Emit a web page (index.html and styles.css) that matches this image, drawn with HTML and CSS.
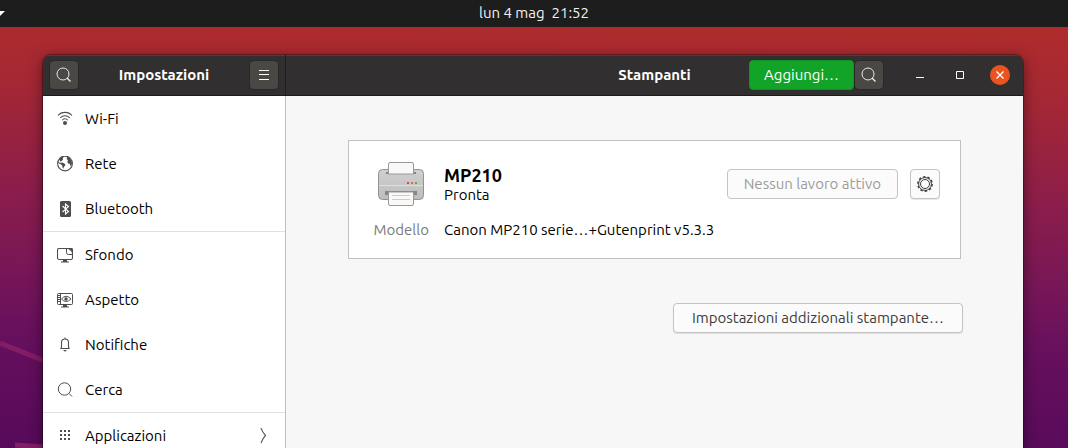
FILE: index.html
```
<!DOCTYPE html>
<html lang="it">
<head>
  <meta charset="UTF-8">
  <meta name="viewport" content="width=device-width, initial-scale=1">
  <title>Impostazioni - Stampanti</title>
  <link rel="stylesheet" href="styles.css">
</head>
<body>
  <header class="topbar">
    <svg class="topbar-arrow" width="5" height="5" viewBox="0 0 5 5"><path d="M0 0h5L0 5z" fill="#fff"/></svg>
    <time class="clock">lun 4 mag&nbsp; 21:52</time>
  </header>

  <main class="desktop">
    <!-- wallpaper lines -->
    <svg class="wallpaper-lines" width="60" height="130" viewBox="0 0 60 130">
      <path d="M0 25L60 49M15 127L60 130" fill="none" stroke="#821d66" stroke-width="5"/>
    </svg>

    <div class="window">
      <div class="titlebar">
        <div class="titlebar-left">
          <button class="dark-btn" aria-label="Cerca">
            <svg width="16" height="16" viewBox="0 0 16 16" fill="none" stroke="#e8e8e7"><circle cx="7" cy="7" r="6"/><path d="M11 11l3.500 3.500" stroke-width="1.4"/></svg>
          </button>
          <h1>Impostazioni</h1>
          <button class="dark-btn" aria-label="Menu">
            <svg width="16" height="16" viewBox="0 0 16 16" fill="none" stroke="#fff"><path d="M3 3.5h10M3 7.5h10M3 12.5h10"/></svg>
          </button>
        </div>
        <div class="titlebar-right">
          <h2>Stampanti</h2>
          <div class="actions">
            <button class="add-btn">Aggiungi…</button>
            <button class="dark-btn" aria-label="Cerca stampanti">
              <svg width="16" height="16" viewBox="0 0 16 16" fill="none" stroke="#e8e8e7"><circle cx="7" cy="7" r="6"/><path d="M11 11l3.500 3.500" stroke-width="1.4"/></svg>
            </button>
            <div class="controls">
              <button class="win-btn" aria-label="Minimizza">
                <svg width="16" height="16" viewBox="0 0 16 16"><path d="M4 10h8v1H4z" fill="#fff"/></svg>
              </button>
              <button class="win-btn" aria-label="Massimizza">
                <svg width="16" height="16" viewBox="0 0 16 16"><path d="M4.5 4.5h7v7h-7z" fill="none" stroke="#fff"/></svg>
              </button>
              <button class="win-btn close" aria-label="Chiudi">
                <svg width="16" height="16" viewBox="0 0 16 16"><path d="M4.5 4.5l7 7M11.5 4.5l-7 7" stroke="#fff" stroke-width="1.3"/></svg>
              </button>
            </div>
          </div>
        </div>
      </div>

      <div class="panes">
        <nav class="sidebar">
          <a href="#wifi">
            <svg width="16" height="16" viewBox="0 0 16 16" fill="none" stroke="#4d4d4d" stroke-width="1.1"><path d="M1 4.500C4.500 .3 11.500 .3 15 4.500M3.200 7C5.500 4 10.500 4 12.800 7M5.200 9.300C6.500 7.300 9.500 7.300 10.800 9.300"/><circle cx="8" cy="12" r="2" fill="#4d4d4d" stroke="none"/></svg>
            Wi-Fi
          </a>
          <a href="#rete">
            <svg width="16" height="16" viewBox="0 0 16 16"><circle cx="8" cy="7.500" r="7.400" fill="none" stroke="#4d4d4d" stroke-width="1.100"/><path d="M2 3L5 .8l1.500.4-.8 1.300.4 1L4.500 5l-1 .7zM3.500 6.500l2.500.3 2.300 1.400-.2 1.300-1.300 1.500-.3 1.500-.9-.2-.3-2.600L3.800 8.200zM1 4.500l1.200 2L4 7.500l-.5.7L1.200 7zM10 .8l3 1.500 2 4-.4 3-1.200.8-.7-2.400-1.500-.3-.9-1.700.7-1.500L9.700 3z" fill="#4d4d4d"/></svg>
            Rete
          </a>
          <a href="#bluetooth">
            <svg width="16" height="16" viewBox="0 0 16 16"><rect x="3" width="11" height="16" rx="1.500" fill="#4d4d4d"/><path d="M5.500 5l6 5.500-3 2.500V3l3 2.500-6 5.500" fill="none" stroke="#fff" stroke-width="1.100"/></svg>
            Bluetooth
          </a>
          <a href="#sfondo" class="group-start">
            <svg width="16" height="16" viewBox="0 0 16 16"><rect x=".5" y="1.500" width="15" height="11" rx="1.500" fill="none" stroke="#4d4d4d" stroke-width="1.100"/><path d="M9.500 1.500v4q0 2 2 2h4" fill="none" stroke="#4d4d4d"/><path d="M10.500 1.500Q14 3 15.500 7V1.500z" fill="#4d4d4d"/><path d="M6 12.500h4v2h2v1H4v-1h2z" fill="#4d4d4d"/></svg>
            Sfondo
          </a>
          <a href="#aspetto">
            <svg width="16" height="16" viewBox="0 0 16 16"><rect x=".5" y="1.500" width="15" height="11" rx="1" fill="none" stroke="#4d4d4d"/><path d="M3.500 1.500v11M1 3.500h2M1 5.500h2M1 7.500h2M1 9.500h2" stroke="#4d4d4d"/><path d="M4.500 7Q9 1.500 14 7 9 12 4.500 7z" fill="none" stroke="#4d4d4d"/><circle cx="9" cy="7" r="1.700" fill="#4d4d4d"/><path d="M6 12.500h4v2h2v1H4v-1h2z" fill="#4d4d4d"/></svg>
            Aspetto
          </a>
          <a href="#notifiche">
            <svg width="16" height="16" viewBox="0 0 16 16" fill="none" stroke="#4d4d4d" stroke-width="1.100"><path d="M3.500 11.500q1-.5 1-2V5.500Q4.500 2 8 2T11.500 5.500v4q0 1.500 1 2zM8 .5V2"/><path d="M6 13h4l-2 1.700z" fill="#4d4d4d" stroke="none"/></svg>
            Notifiche
          </a>
          <a href="#cerca">
            <svg width="16" height="16" viewBox="0 0 16 16" fill="none" stroke="#4d4d4d"><circle cx="7.500" cy="7" r="6.200"/><path d="M12 11.500l3 3"/></svg>
            Cerca
          </a>
          <a href="#applicazioni" class="group-start">
            <svg width="16" height="16" viewBox="0 0 16 16"><path d="M3 2h2v2H3zM7 2h2v2H7zM11 2h2v2h-2zM3 6h2v2H3zM7 6h2v2H7zM11 6h2v2h-2zM3 10h2v2H3zM7 10h2v2H7zM11 10h2v2h-2z" fill="#4d4d4d"/></svg>
            Applicazioni
            <svg class="chevron" width="16" height="16" viewBox="0 0 16 16"><path d="M6 0Q7.500 4.500 10.500 7.500 7.500 10.500 6 15" fill="none" stroke="#5a5a5a" stroke-width="1.100"/></svg>
          </a>
        </nav>

        <section class="content">
          <article class="printer">
            <svg class="printer-icon" width="48" height="48" viewBox="0 0 48 48">
              <defs>
                <linearGradient id="shell" x2="0" y2="1"><stop offset="0" stop-color="#d0d0d0"/><stop offset="1" stop-color="#bdbdbd"/></linearGradient>
              </defs>
              <rect x="1.500" y="9.500" width="45" height="30" rx="4" fill="url(#shell)" stroke="#929292"/>
              <path d="M2 25.500h44" stroke="#dedede"/>
              <path d="M9 12h30v2H9zM8 31h32v4H8z" fill="#858585"/>
              <path d="M11.500 14V4q0-1.500 1.500-1.500h22q1.500 0 1.500 1.500v10z" fill="#faf9f8" stroke="#999"/>
              <path d="M11.500 32h25v12q0 1.500-1.500 1.500H13q-1.500 0-1.500-1.500z" fill="#faf9f8" stroke="#999"/>
              <path d="M15 35.500h18M15 39.500h18" stroke="#ccc"/>
              <path d="M30 22h2v2h-2z" fill="#e0425b"/>
              <path d="M34 22h2v2h-2z" fill="#ed6b36"/>
              <path d="M38 22h2v2h-2z" fill="#5db34a"/>
            </svg>
            <div class="printer-name">
              <h3>MP210</h3>
              <p>Pronta</p>
            </div>
            <div class="printer-actions">
              <button class="light-btn" disabled>Nessun lavoro attivo</button>
              <button class="light-btn icon-btn" aria-label="Opzioni stampante">
                <svg width="18" height="18" viewBox="0 0 18 18" fill="none" stroke="#3d3d3d"><circle cx="9" cy="9" r="7.200" stroke-width="1.400" stroke-dasharray="2.500 2.024"/><circle cx="9" cy="9" r="6.400"/><circle cx="9" cy="9" r="4.500"/></svg>
              </button>
            </div>
            <span class="label">Modello</span>
            <span class="model">Canon MP210 serie…+Gutenprint v5.3.3</span>
          </article>
          <button class="light-btn extra-btn">Impostazioni addizionali stampante…</button>
        </section>
      </div>
    </div>
  </main>
</body>
</html>
```

FILE: styles.css
```
* {
  margin: 0;
  padding: 0;
  box-sizing: border-box;
}

body {
  height: 100vh;
  display: flex;
  flex-direction: column;
  overflow: hidden;
  font-family: Ubuntu, "Noto Sans", "Open Sans", sans-serif;
  font-size: 15px;
  line-height: 20px;
  color: #000;
}

button {
  font: inherit;
  display: flex;
  align-items: center;
  justify-content: center;
}

svg {
  display: block;
  flex: none;
}

h1,
h2 {
  font-size: 15px;
  font-weight: bold;
  text-align: center;
}

.topbar {
  flex: none;
  height: 27px;
  padding-bottom: 1px;
  display: grid;
  grid-template-columns: 1fr auto 1fr;
  align-items: center;
  background: #1d1d1d;
  color: #f2f2f2;
}

.desktop {
  flex: 1;
  min-height: 0;
  display: flex;
  position: relative;
  padding: 28px 45px 0 43px;
  background: linear-gradient(181deg, #b02c2b 0%, #a32735 18%, #8c1e4a 40%, #771658 60%, #650f5d 76%, #560a5a 100%);
}

.wallpaper-lines {
  position: absolute;
  left: 0;
  bottom: 0;
}

.window {
  flex: 1;
  display: flex;
  flex-direction: column;
  position: relative;
  border-radius: 8px 8px 0 0;
  box-shadow: 0 0 0 1px rgba(0, 0, 0, 0.3), 0 3px 14px rgba(0, 0, 0, 0.5);
  overflow: hidden;
}

/* title bar */
.titlebar {
  flex: none;
  height: 41px;
  display: flex;
  background: #322f30;
  border-bottom: 1px solid #1c1a1b;
  box-shadow: inset 0 1px #454243;
  color: #fff;
}

.titlebar-left {
  width: 243px;
  display: flex;
  align-items: center;
  justify-content: space-between;
  padding: 0 7px;
  border-right: 1px solid #1f1d1e;
}

.titlebar-right {
  flex: 1;
  display: grid;
  grid-template-columns: 1fr auto 1fr;
  align-items: center;
}

.titlebar-right h2 {
  grid-column: 2;
}

.actions {
  display: flex;
  align-items: center;
  justify-content: flex-end;
  gap: 1px;
  padding-right: 13px;
}

.dark-btn {
  width: 28px;
  height: 28px;
  border: 0;
  border-radius: 4px;
  background: #4a4845;
  box-shadow: 0 0 0 1px #292728;
}

.add-btn {
  height: 30px;
  padding: 0 14px;
  border: 1px solid #0e9420;
  border-radius: 4px;
  background: #12a428;
  color: #fff;
}

.controls {
  display: flex;
  gap: 20px;
  padding-left: 26px;
}

.win-btn {
  width: 20px;
  height: 20px;
  border: 0;
  border-radius: 50%;
  background: none;
}

.close {
  background: #e95420;
}

/* body of the window */
.panes {
  flex: 1;
  min-height: 0;
  display: flex;
}

.sidebar {
  width: 243px;
  background: #fff;
  border-right: 1px solid #c0c0c0;
  overflow: hidden;
}

.sidebar a {
  display: flex;
  align-items: center;
  gap: 12px;
  height: 45px;
  padding: 0 14px;
  color: #000;
  text-decoration: none;
}

.sidebar .group-start {
  height: 46px;
  border-top: 1px solid #e0e0e0;
}

.chevron {
  margin-left: auto;
}

.content {
  flex: 1;
  display: flex;
  flex-direction: column;
  padding: 44px 60px;
  background: #f7f7f7;
}

.printer {
  display: grid;
  grid-template-columns: 56px 1fr auto;
  column-gap: 15px;
  row-gap: 12px;
  align-items: center;
  margin: 0 2px 44px;
  padding: 19px 20px 18px 24px;
  background: #fff;
  border: 1px solid #c0c0c0;
}

.printer-icon {
  justify-self: center;
}

.printer-name h3 {
  font-size: 18px;
  line-height: 22px;
}

.printer-name p {
  line-height: 18px;
}

.printer-actions {
  display: flex;
  gap: 12px;
}

.label {
  text-align: right;
  color: #7a7a7a;
}

.model {
  grid-column: 2 / -1;
}

.light-btn {
  height: 30px;
  padding: 0 16px;
  border: 1px solid #c4c4c4;
  border-radius: 4px;
  background: #fbfbfb;
  box-shadow: 0 1px 1px rgba(0, 0, 0, 0.1);
  color: #3d3d3d;
}

.light-btn:disabled {
  color: #9b9b9b;
  box-shadow: none;
}

.icon-btn {
  width: 30px;
  padding: 0;
}

.extra-btn {
  align-self: flex-end;
  padding: 0 18px;
}
```
